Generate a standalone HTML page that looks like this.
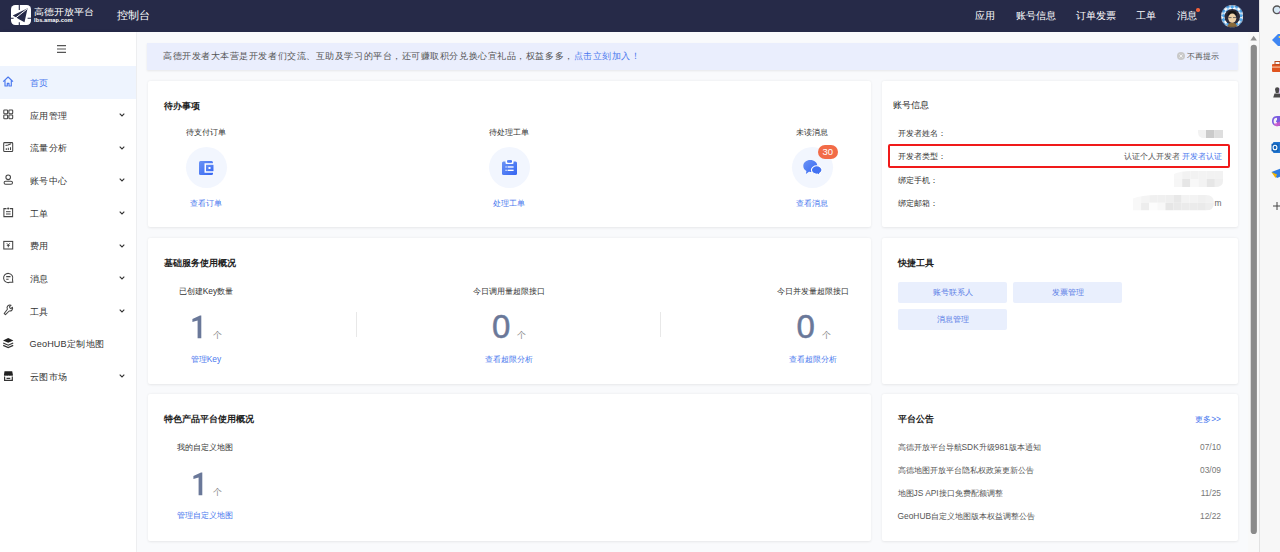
<!DOCTYPE html>
<html><head><meta charset="utf-8">
<style>
*{margin:0;padding:0;box-sizing:border-box}
html,body{width:1280px;height:552px;overflow:hidden;background:#f9fafc;font-family:"Liberation Sans",sans-serif;color:#333}
.a{position:absolute;white-space:nowrap}
#hdr{position:absolute;left:0;top:0;width:1259px;height:31.5px;background:#262a48}
#side{position:absolute;left:0;top:31.5px;width:136px;height:521px;background:#fff;box-shadow:1px 0 3px rgba(0,0,0,.08)}
#main{position:absolute;left:136.5px;top:31.5px;width:1112px;height:521px;background:#f9fafc}
#sb{display:none}
#edge{position:absolute;left:1259px;top:0;width:21px;height:552px;background:#f7f7f7;border-left:1px solid #e2e2e2}
.card{position:absolute;background:#fff;border-radius:2px;box-shadow:0 .5px 2.5px rgba(0,0,0,.08)}
.t{font-size:9.2px;font-weight:bold;color:#222}
.s{font-size:8.4px;color:#333}
.lk{font-size:8.4px;color:#4a78ee}
.nav{font-size:10px;color:#fff;margin-top:-.5px}
.mi{font-size:9.1px;color:#333;letter-spacing:.55px;margin-top:.8px}
.cir{position:absolute;width:41px;height:41px;border-radius:50%;background:#f2f6fe}
.num{font-size:33px;color:#6a7899;-webkit-text-stroke:.5px #6a7899}
.ge{font-size:9px;color:#888}
.btn{position:absolute;height:21px;background:#e9effd;border-radius:2px;font-size:8.4px;color:#5a7de6;text-align:center;line-height:21px}
</style></head><body>
<div id="hdr">
  <svg class="a" style="left:11px;top:5px" width="20" height="20" viewBox="0 0 20 20"><rect width="20" height="20" rx="4.2" fill="#fff"/><path d="M8.3 0V5M8.3 17.3V20M0 13.3H2.6M16.6 13.3H20" stroke="#262a48" stroke-width="1.1"/><path d="M1.7 10.5L16.6 3.2 13.5 17.3 7.9 14.3 6.9 13.6Z" fill="#262a48"/><path d="M3.6 13.8L15.9 4.1" stroke="#fff" stroke-width="1"/></svg>
  <div class="a" style="left:34px;top:6.5px;font-size:9.6px;color:#fff;font-weight:normal;letter-spacing:-.1px;transform:scaleY(.9);transform-origin:0 0">高德开放平台</div>
  <div class="a" style="left:34px;top:16.8px;font-size:5.7px;color:#fff;font-weight:bold;letter-spacing:.05px">lbs.amap.com</div>
  <div class="a" style="left:117px;top:8px;font-size:11.2px;color:#fff">控制台</div>
  <div class="a nav" style="left:975px;top:9px">应用</div>
  <div class="a nav" style="left:1015.5px;top:9px">账号信息</div>
  <div class="a nav" style="left:1075.5px;top:9px">订单发票</div>
  <div class="a nav" style="left:1136px;top:9px">工单</div>
  <div class="a nav" style="left:1177px;top:9px">消息</div>
  <div class="a" style="left:1196px;top:8px;width:3.5px;height:3.5px;border-radius:50%;background:#f4623a"></div>
  <svg class="a" style="left:1220.5px;top:5px" width="22.5" height="22.5" viewBox="0 0 22 22"><defs><clipPath id="cc"><circle cx="11" cy="11" r="11"/></clipPath><pattern id="chk" width="6" height="6" patternUnits="userSpaceOnUse" patternTransform="rotate(45 11 11)"><rect width="6" height="6" fill="#fff"/><rect width="3" height="3" fill="#4ea6ec"/><rect x="3" y="3" width="3" height="3" fill="#4ea6ec"/></pattern></defs><g clip-path="url(#cc)"><rect width="22" height="22" fill="url(#chk)"/><circle cx="11" cy="11.5" r="7.6" fill="#2a2a3a"/><path d="M6.5 11.5C6 7.5 8 5.5 11 5.5S16 7.5 15.5 11.5C15 9.5 14 9 11 9S7 9.5 6.5 11.5Z" fill="#151515"/><ellipse cx="11" cy="13" rx="3.9" ry="4.6" fill="#ecd0a8"/><path d="M7.3 12.3H10.3M11.7 12.3H14.7" stroke="#555" stroke-width=".8"/><path d="M6 22C6.5 18.5 8.5 17.3 11 17.3S15.5 18.5 16 22Z" fill="#8a6a3a"/></g><circle cx="11" cy="11" r="10.6" fill="none" stroke="#262a48" stroke-width=".5" opacity=".5"/></svg>
</div>
<div id="side">
  <svg class="a" style="left:57px;top:13.5px" width="9" height="8" viewBox="0 0 9 8"><path d="M0 .6H9M0 4H9M0 7.4H9" stroke="#555" stroke-width="1.1"/></svg>
  <div class="a" style="left:0;top:34px;width:136px;height:33px;background:#eef4fe"></div>
  <div class="a mi" style="left:29.5px;top:44.5px;color:#4a78ee">首页</div>
  <div class="a mi" style="left:29.5px;top:77.5px;color:#333">应用管理</div>
  <svg class="a" style="left:118.5px;top:81.5px" width="6" height="4" viewBox="0 0 6 4"><path d="M.7 .7L3 3 5.3 .7" fill="none" stroke="#333" stroke-width="1.1"/></svg>
  <div class="a mi" style="left:29.5px;top:110.0px;color:#333">流量分析</div>
  <svg class="a" style="left:118.5px;top:114.0px" width="6" height="4" viewBox="0 0 6 4"><path d="M.7 .7L3 3 5.3 .7" fill="none" stroke="#333" stroke-width="1.1"/></svg>
  <div class="a mi" style="left:29.5px;top:142.5px;color:#333">账号中心</div>
  <svg class="a" style="left:118.5px;top:146.5px" width="6" height="4" viewBox="0 0 6 4"><path d="M.7 .7L3 3 5.3 .7" fill="none" stroke="#333" stroke-width="1.1"/></svg>
  <div class="a mi" style="left:29.5px;top:175.5px;color:#333">工单</div>
  <svg class="a" style="left:118.5px;top:179.5px" width="6" height="4" viewBox="0 0 6 4"><path d="M.7 .7L3 3 5.3 .7" fill="none" stroke="#333" stroke-width="1.1"/></svg>
  <div class="a mi" style="left:29.5px;top:208.0px;color:#333">费用</div>
  <svg class="a" style="left:118.5px;top:212.0px" width="6" height="4" viewBox="0 0 6 4"><path d="M.7 .7L3 3 5.3 .7" fill="none" stroke="#333" stroke-width="1.1"/></svg>
  <div class="a mi" style="left:29.5px;top:240.5px;color:#333">消息</div>
  <svg class="a" style="left:118.5px;top:244.5px" width="6" height="4" viewBox="0 0 6 4"><path d="M.7 .7L3 3 5.3 .7" fill="none" stroke="#333" stroke-width="1.1"/></svg>
  <div class="a mi" style="left:29.5px;top:273.5px;color:#333">工具</div>
  <svg class="a" style="left:118.5px;top:277.5px" width="6" height="4" viewBox="0 0 6 4"><path d="M.7 .7L3 3 5.3 .7" fill="none" stroke="#333" stroke-width="1.1"/></svg>
  <div class="a mi" style="left:29.5px;top:306.0px;color:#333"><span style="letter-spacing:.15px">GeoHUB</span>定制地图</div>
  <div class="a mi" style="left:29.5px;top:338.5px;color:#333">云图市场</div>
  <svg class="a" style="left:118.5px;top:342.5px" width="6" height="4" viewBox="0 0 6 4"><path d="M.7 .7L3 3 5.3 .7" fill="none" stroke="#333" stroke-width="1.1"/></svg>
</div>
<div id="main"></div>
<div class="a" style="left:147px;top:43px;width:1091px;height:26.5px;background:#eaeefd;box-shadow:0 1px 2px rgba(0,0,0,.08)"></div>
<div class="a" style="left:163px;top:50.2px;font-size:9.3px;letter-spacing:.55px;color:#555">高德开发者大本营是开发者们交流、互助及学习的平台，还可赚取积分兑换心宜礼品，权益多多，<span style="color:#4a78ee">点击立刻加入！</span></div>
<svg class="a" style="left:1177px;top:52px" width="8" height="8" viewBox="0 0 8 8"><circle cx="4" cy="4" r="4" fill="#c9c9c9"/><path d="M2.5 2.5L5.5 5.5M5.5 2.5L2.5 5.5" stroke="#f5f5f5" stroke-width=".9"/></svg>
<div class="a" style="left:1187px;top:50.5px;font-size:8.4px;color:#555">不再提示</div>

<div class="card" style="left:147.5px;top:81px;width:723.5px;height:146px"></div>
<div class="card" style="left:881.5px;top:81px;width:356.5px;height:146px"></div>
<div class="card" style="left:147.5px;top:237.5px;width:723.5px;height:146px"></div>
<div class="card" style="left:881.5px;top:237.5px;width:356.5px;height:146px"></div>
<div class="card" style="left:147.5px;top:394px;width:723.5px;height:146.5px"></div>
<div class="card" style="left:881.5px;top:394px;width:356.5px;height:146.5px"></div>

<div class="a t" style="left:163.5px;top:99.5px">待办事项</div>
<div class="a s" style="left:164px;top:126.5px;width:84px;text-align:center">待支付订单</div>
<div class="a s" style="left:467px;top:126.5px;width:84px;text-align:center">待处理工单</div>
<div class="a s" style="left:770px;top:126.5px;width:84px;text-align:center">未读消息</div>
<div class="cir" style="left:185.5px;top:147px"></div>
<div class="cir" style="left:488.5px;top:147px"></div>
<div class="cir" style="left:791.5px;top:147px"></div>
<div class="a lk" style="left:164px;top:198px;width:84px;text-align:center">查看订单</div>
<div class="a lk" style="left:467px;top:198px;width:84px;text-align:center">处理工单</div>
<div class="a lk" style="left:770px;top:198px;width:84px;text-align:center">查看消息</div>
<div class="a" style="left:817.5px;top:145px;width:20.5px;height:14px;border-radius:7px;background:#f26b47;color:#fff;font-size:9.5px;text-align:center;line-height:14px">30</div>

<div class="a t" style="left:893px;top:99px;font-weight:normal;color:#222;font-size:9.3px">账号信息</div>
<div class="a s" style="left:897.5px;top:128px">开发者姓名：</div>
<div class="a s" style="left:897.5px;top:151px">开发者类型：</div>
<div class="a s" style="left:897.5px;top:174.5px">绑定手机：</div>
<div class="a s" style="left:897.5px;top:197.5px">绑定邮箱：</div>
<div class="a" style="left:888px;top:144px;width:341.5px;height:23.5px;border:2px solid #f01a1a;border-radius:2px"></div>
<div class="a s" style="right:58px;top:151px;color:#555">认证个人开发者 <span style="color:#4a78ee">开发者认证</span></div>
<svg class="a" style="left:1198px;top:129.7px" width="25" height="8" viewBox="0 0 25 8"><path d="M0 0H8V8H6Q0 8 0 2Z" fill="#f2f2f2"/><rect x="8" width="8.2" height="8" fill="#cbcbcb"/><rect x="16.2" width="8.8" height="8" fill="#dedede"/></svg>
<svg class="a" style="left:1174px;top:171px" width="49" height="16" viewBox="0 0 49 16"><defs><clipPath id="m1"><path d="M0 3Q6 0 18 0H49V10Q49 16 41 16H0Z"/></clipPath></defs><g clip-path="url(#m1)"><rect x="0.0" y="0" width="8.17" height="8" fill="#f7f7f7"/><rect x="8.17" y="0" width="8.17" height="8" fill="#f2f2f2"/><rect x="16.34" y="0" width="8.17" height="8" fill="#f2f2f2"/><rect x="24.509999999999998" y="0" width="8.17" height="8" fill="#f3f3f3"/><rect x="32.68" y="0" width="8.17" height="8" fill="#f2f2f2"/><rect x="40.85" y="0" width="8.17" height="8" fill="#f2f2f2"/><rect x="0.0" y="8" width="8.17" height="8" fill="#f6f6f6"/><rect x="8.17" y="8" width="8.17" height="8" fill="#e6e6e6"/><rect x="16.34" y="8" width="8.17" height="8" fill="#f8f8f8"/><rect x="24.509999999999998" y="8" width="8.17" height="8" fill="#f3f3f3"/><rect x="32.68" y="8" width="8.17" height="8" fill="#e6e6e6"/><rect x="40.85" y="8" width="8.17" height="8" fill="#efefef"/></g></svg>
<svg class="a" style="left:1133px;top:195.3px" width="81" height="15.5" viewBox="0 0 81 15.5"><defs><clipPath id="m2"><path d="M0 3.5Q8 0 24 0H73Q81 0 81 7.7T73 15.5H0Z"/></clipPath></defs><g clip-path="url(#m2)"><rect x="0.0" y="0.0" width="8.1" height="7.75" fill="#f8f8f8"/><rect x="8.1" y="0.0" width="8.1" height="7.75" fill="#f4f4f4"/><rect x="16.2" y="0.0" width="8.1" height="7.75" fill="#f0f0f0"/><rect x="24.299999999999997" y="0.0" width="8.1" height="7.75" fill="#f0f0f0"/><rect x="32.4" y="0.0" width="8.1" height="7.75" fill="#efefef"/><rect x="40.5" y="0.0" width="8.1" height="7.75" fill="#e8e8e8"/><rect x="48.599999999999994" y="0.0" width="8.1" height="7.75" fill="#f3f3f3"/><rect x="56.699999999999996" y="0.0" width="8.1" height="7.75" fill="#f3f3f3"/><rect x="64.8" y="0.0" width="8.1" height="7.75" fill="#f0f0f0"/><rect x="72.89999999999999" y="0.0" width="8.1" height="7.75" fill="#f2f2f2"/><rect x="0.0" y="7.75" width="8.1" height="7.75" fill="#f8f8f8"/><rect x="8.1" y="7.75" width="8.1" height="7.75" fill="#ededed"/><rect x="16.2" y="7.75" width="8.1" height="7.75" fill="#fcfcfc"/><rect x="24.299999999999997" y="7.75" width="8.1" height="7.75" fill="#f8f8f8"/><rect x="32.4" y="7.75" width="8.1" height="7.75" fill="#e6e6e6"/><rect x="40.5" y="7.75" width="8.1" height="7.75" fill="#e9e9e9"/><rect x="48.599999999999994" y="7.75" width="8.1" height="7.75" fill="#ebebeb"/><rect x="56.699999999999996" y="7.75" width="8.1" height="7.75" fill="#ebebeb"/><rect x="64.8" y="7.75" width="8.1" height="7.75" fill="#eaeaea"/><rect x="72.89999999999999" y="7.75" width="8.1" height="7.75" fill="#eeeeee"/></g></svg>
<div class="a s" style="left:1214.5px;top:197.5px;color:#666">m</div>

<div class="a t" style="left:163.5px;top:257.0px">基础服务使用概况</div>
<div class="a s" style="left:164px;top:286px;width:84px;text-align:center">已创建Key数量</div>
<div class="a s" style="left:467px;top:286px;width:84px;text-align:center">今日调用量超限接口</div>
<div class="a s" style="left:771px;top:286px;width:84px;text-align:center">今日并发量超限接口</div>
<svg class="a" style="left:192px;top:314.5px" width="10" height="24" viewBox="0 0 10 24"><path d="M0.4 4.1L8 0.4H9.3V23.3H5.6V5.4L0.4 7.1Z" fill="#6a7899"/></svg>
<div class="a ge" style="left:213px;top:329px">个</div>
<div class="a num" style="left:492px;top:307.5px">0</div>
<div class="a ge" style="left:517px;top:329px">个</div>
<div class="a num" style="left:796.5px;top:307.5px">0</div>
<div class="a ge" style="left:821.5px;top:329px">个</div>
<div class="a" style="left:356px;top:312px;width:1px;height:25px;background:#e8e8e8"></div>
<div class="a" style="left:660px;top:312px;width:1px;height:25px;background:#e8e8e8"></div>
<div class="a lk" style="left:164px;top:353.5px;width:84px;text-align:center">管理Key</div>
<div class="a lk" style="left:467px;top:353.5px;width:84px;text-align:center">查看超限分析</div>
<div class="a lk" style="left:771px;top:353.5px;width:84px;text-align:center">查看超限分析</div>

<div class="a t" style="left:898px;top:257.0px">快捷工具</div>
<div class="btn" style="left:898px;top:281.5px;width:109px">账号联系人</div>
<div class="btn" style="left:1013px;top:281.5px;width:109px">发票管理</div>
<div class="btn" style="left:898px;top:308.5px;width:109px">消息管理</div>

<div class="a t" style="left:163.5px;top:413.0px">特色产品平台使用概况</div>
<div class="a s" style="left:162.5px;top:442px;width:84px;text-align:center">我的自定义地图</div>
<svg class="a" style="left:192.5px;top:471.5px" width="10" height="24" viewBox="0 0 10 24"><path d="M0.4 4.1L8 0.4H9.3V23.3H5.6V5.4L0.4 7.1Z" fill="#6a7899"/></svg>
<div class="a ge" style="left:212.5px;top:485.5px">个</div>
<div class="a lk" style="left:162.5px;top:510px;width:84px;text-align:center">管理自定义地图</div>

<div class="a t" style="left:897.5px;top:413.0px">平台公告</div>
<div class="a lk" style="right:59px;top:414px">更多&gt;&gt;</div>
<div class="a s" style="left:897.5px;top:441.5px;color:#555">高德开放平台导航SDK升级981版本通知</div>
<div class="a s" style="left:897.5px;top:464.5px;color:#555">高德地图开放平台隐私权政策更新公告</div>
<div class="a s" style="left:897.5px;top:487.5px;color:#555">地图JS API接口免费配额调整</div>
<div class="a s" style="left:897.5px;top:510.5px;color:#555">GeoHUB自定义地图版本权益调整公告</div>
<div class="a s" style="right:59px;top:441.5px;color:#777">07/10</div>
<div class="a s" style="right:59px;top:464.5px;color:#777">03/09</div>
<div class="a s" style="right:59px;top:487.5px;color:#777">11/25</div>
<div class="a s" style="right:59px;top:510.5px;color:#777">12/22</div>

<div id="sb"></div>
<div id="edge"></div>
<svg class="a" style="left:1248px;top:31.5px" width="11" height="521" viewBox="0 0 11 521"><rect width="11" height="521" fill="#f9f9f9"/><path d="M2.4 8.4L5.65 3.7 8.9 8.4Z" fill="#8f8f8f"/><rect x="2.7" y="12.7" width="6.2" height="489.3" rx="3.1" fill="#8b8b8b"/></svg>
<svg class="a" style="left:1260px;top:0" width="20" height="552" viewBox="0 0 20 552">
<circle cx="17" cy="9.8" r="3.8" fill="#d6e8f5" stroke="#555" stroke-width="1.4"/><path d="M19.5 12L21 13.5" stroke="#c040c0" stroke-width="1.5"/>
<path d="M12 40L18 34H22V46H18Z" fill="#3f86f2"/><circle cx="19.5" cy="37" r="1" fill="#ffd24d"/>
<rect x="12" y="64" width="10" height="8" rx="1" fill="#e0541f"/><rect x="15" y="61.5" width="5" height="3" fill="none" stroke="#b84a1f" stroke-width="1"/><rect x="12" y="66.5" width="10" height="1.2" fill="#f7c1a0"/>
<path d="M15 89.5A2.2 2.2 0 0 1 19.4 89.5L18.6 93H15.8ZM13.2 97.5L14.5 93.5H19.9L21.2 97.5Z" fill="#4a4a4a"/><rect x="19.5" y="88" width="2" height="6" fill="#c59ef0"/>
<path d="M17 116C13 116 12 119 12 121S13 126 17 126H21V116Z" fill="#7a5ce0"/><path d="M17 119A2.2 2.2 0 1 0 17 123.4" fill="none" stroke="#f4f4f4" stroke-width="2.4"/><path d="M14 124C15 127 18 127 21 125V121Z" fill="#d55ac8" opacity=".8"/>
<rect x="13" y="142" width="9" height="11" rx="1" fill="#1f74cf"/><rect x="11.5" y="143.5" width="7" height="8" rx="1" fill="#0f5fb5"/><ellipse cx="15" cy="147.5" rx="1.9" ry="2.3" fill="none" stroke="#fff" stroke-width="1.1"/>
<path d="M11.5 172L22 168V176L17 178Z" fill="#2f7de1"/><path d="M11.5 172L17 174.5 15.5 178Z" fill="#f5b400"/>
<path d="M13 206H21M17 202V210" stroke="#444" stroke-width="1"/>
</svg>

<svg class="a" style="left:0;top:72px" width="20" height="20" viewBox="0 0 20 20"><path d="M3.2 9.6L8.1 5 13 9.6M5 8.3V14H7.3V11.4H9V14H11.3V8.3" fill="none" stroke="#4a78ee" stroke-width="1.15" stroke-linejoin="round"/></svg>
<svg class="a" style="left:0;top:105px" width="20" height="20" viewBox="0 0 20 20"><g fill="none" stroke="#444" stroke-width="1.05"><rect x="3.8" y="4.9" width="3.8" height="3.9" rx=".7"/><rect x="8.9" y="4.9" width="3.8" height="3.9" rx=".7"/><rect x="3.8" y="9.9" width="3.8" height="3.9" rx=".7"/><rect x="8.9" y="9.9" width="3.8" height="3.9" rx=".7"/></g></svg>
<svg class="a" style="left:0;top:137px" width="20" height="20" viewBox="0 0 20 20"><g fill="none" stroke="#444" stroke-width="1.05"><rect x="3.7" y="5.6" width="9" height="8.9" rx=".8"/><path d="M5.5 8.6L8 8.1 11 6.8M6.3 11.2V13M8.3 10.8V13M10.5 10.2V13"/></g></svg>
<svg class="a" style="left:0;top:170px" width="20" height="20" viewBox="0 0 20 20"><g fill="none" stroke="#444" stroke-width="1.05"><circle cx="8.2" cy="7.3" r="2.3"/><rect x="4.1" y="11.3" width="8.4" height="3" rx="1.5"/></g></svg>
<svg class="a" style="left:0;top:203px" width="20" height="20" viewBox="0 0 20 20"><g fill="none" stroke="#444" stroke-width="1.05"><path d="M6.5 5.6H3.9V13.6H12.6V5.6H9.8"/></g><path d="M6 8.7H10.6M6 11H10.6" stroke="#444" stroke-width="1"/><circle cx="8.2" cy="5.5" r="1.1" fill="#444"/></svg>
<svg class="a" style="left:0;top:235px" width="20" height="20" viewBox="0 0 20 20"><g fill="none" stroke="#444" stroke-width="1.05"><rect x="3.8" y="6.4" width="8.9" height="7.6"/></g><path d="M6.8 8.3L8.3 9.8 9.8 8.3M6.8 10.3H9.8M8.3 9.8V12.3" fill="none" stroke="#444" stroke-width="1"/></svg>
<svg class="a" style="left:0;top:268px" width="20" height="20" viewBox="0 0 20 20"><g fill="none" stroke="#444" stroke-width="1.05"><path d="M12.52 11.57A4.6 4.6 0 1 0 9.77 14.32L12.8 14.3Z"/><path d="M6.2 8.6H10.5M6.2 11.2H8.6"/></g></svg>
<svg class="a" style="left:0;top:301px" width="20" height="20" viewBox="0 0 20 20"><g fill="none" stroke="#444" stroke-width="1.05" stroke-linejoin="round"><path d="M4.2 12.5L5.5 13.7 9.2 10A2.8 2.8 0 0 0 12.4 6.2L11 7.6 9.8 6.9 9.6 5.5 11 4.3A2.8 2.8 0 0 0 7.4 8.2Z"/></g></svg>
<svg class="a" style="left:0;top:333px" width="20" height="20" viewBox="0 0 20 20"><path d="M3 7.5L8.2 5 13.4 7.5 8.2 9.8Z" fill="#222"/><path d="M3.2 10L8.2 12.2 13.2 10M3.2 12.4L8.2 14.6 13.2 12.4" fill="none" stroke="#333" stroke-width="1.2"/></svg>
<svg class="a" style="left:0;top:366px" width="20" height="20" viewBox="0 0 20 20"><path d="M4.5 5.2H12.2L13 9.2Q12 10.2 11 9.4 10 10.2 8.6 9.4 7.3 10.2 6 9.4 4.8 10.2 3.9 9.2Z" fill="#222"/><path d="M4.6 10.4V14.4H12.3V10.4M6.5 12.3H10.3" fill="none" stroke="#333" stroke-width="1.2"/></svg>
<svg class="a" style="left:198.5px;top:160.8px" width="15.5" height="14" viewBox="0 0 31 28"><defs><linearGradient id="g1" x1="0" y1="0" x2="1" y2="1"><stop offset="0" stop-color="#6b93f5"/><stop offset="1" stop-color="#3566f2"/></linearGradient></defs><rect x="0" y="0" width="28" height="28" rx="3" fill="url(#g1)"/><rect x="11" y="4.5" width="20" height="19" fill="#fff"/><rect x="14" y="7.5" width="15" height="13" fill="url(#g1)"/><rect x="19" y="12" width="4" height="4" fill="#fff"/></svg>
<svg class="a" style="left:501.5px;top:160px" width="15.5" height="15" viewBox="0 0 31 30"><rect x="0" y="3" width="30" height="27" rx="3" fill="url(#g1)"/><rect x="7" y="0" width="16" height="8" rx="2" fill="#fff"/><rect x="10" y="0" width="10" height="5.5" rx="2" fill="url(#g1)"/><rect x="11.2" y="12.6" width="12" height="2.7" fill="#fff"/><rect x="11.2" y="19.3" width="12" height="2.7" fill="#fff"/><rect x="6.9" y="12.6" width="2.5" height="2.7" fill="#fff" opacity=".85"/><rect x="6.9" y="19.3" width="2.5" height="2.7" fill="#fff" opacity=".85"/></svg>
<svg class="a" style="left:802px;top:159px" width="21" height="17" viewBox="0 0 21 17"><path d="M8.3 1C4.4 1 1.3 3.6 1.3 6.9c0 2.1 1.2 3.9 3.1 5l-.5 3 3-2.1c.5.1 .9.1 1.4.1 3.9 0 7-2.6 7-6S12.2 1 8.3 1Z" fill="url(#g1)"/><path d="M14.7 6.8c-2.8 0-5.3 2-5.3 4.2s2.5 4.2 5.3 4.2l.8-.1 2.5 1.6-.4-2.3c1.5-.8 2.4-2 2.4-3.4 0-2.3-2.5-4.2-5.3-4.2Z" fill="#4272f2" stroke="#fff" stroke-width="1.1"/></svg>

</body></html>
